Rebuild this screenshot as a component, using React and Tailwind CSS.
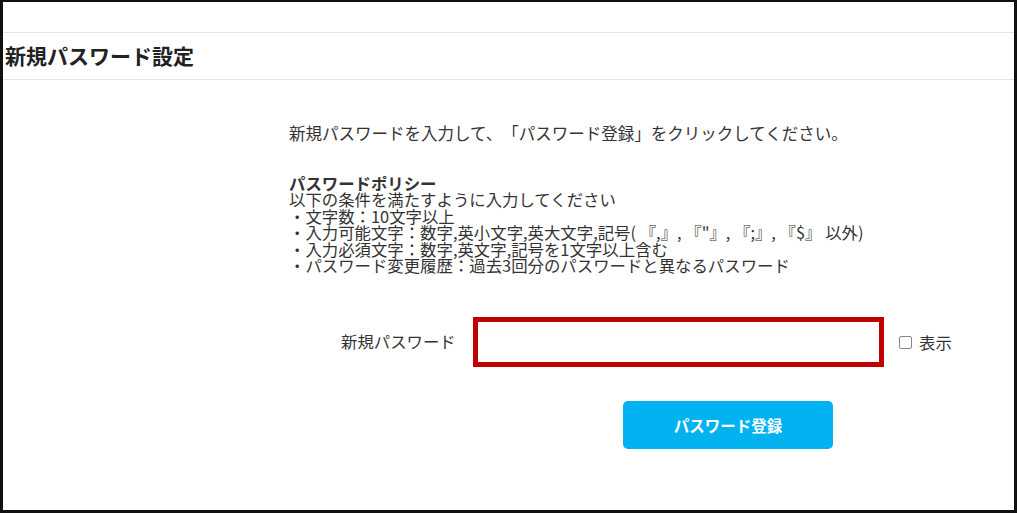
export default function App() {
  const font = { fontFamily: '"Noto Sans CJK JP", "Noto Sans", sans-serif' };
  return (
    <div
      className="w-[1017px] h-[513px] border-[3px] border-t-2 border-[#111] bg-white flex flex-col text-[#333] [text-spacing-trim:space-all]"
      style={font}
    >
      <div className="h-[30px]" />
      <div className="h-[48px] border-y border-[#e3e3e3] flex items-center pl-[2px]">
        <h1 className="text-[21px] font-bold text-[#222]">新規パスワード設定</h1>
      </div>

      <div className="pl-[286px] pt-[41px]">
        <p className="text-[16.5px] leading-[24px]">
          新規パスワードを入力して、「パスワード登録」をクリックしてください。
        </p>
        <div className="mt-[30px] text-[16.4px] leading-[16.4px]">
          <p className="font-bold">パスワードポリシー</p>
          <p>以下の条件を満たすように入力してください</p>
          <p>・文字数：10文字以上</p>
          <p>・入力可能文字：数字,英小文字,英大文字,記号( 『,』, 『"』, 『;』, 『$』 以外)</p>
          <p>・入力必須文字：数字,英文字,記号を1文字以上含む</p>
          <p>・パスワード変更履歴：過去3回分のパスワードと異なるパスワード</p>
        </div>
      </div>

      <div className="mt-[44px] pl-[338px] flex items-center">
        <span className="text-[16.4px] w-[115px] -mt-[3px] whitespace-nowrap">新規パスワード</span>
        <input
          type="password"
          className="ml-[17px] w-[411px] h-[50px] border-[5px] border-[#c00000] bg-white outline-none px-2"
        />
        <label className="ml-[15px] flex items-center gap-[7px] text-[16.4px]">
          <span className="w-[13px] h-[13px] border border-[#888] rounded-[2px] bg-white" />
          表示
        </label>
      </div>

      <div className="mt-[34px] pl-[620px]">
        <button className="w-[210px] h-[48px] rounded-[5px] bg-[#00b2f0] text-white text-[15.5px] font-bold">
          パスワード登録
        </button>
      </div>
    </div>
  );
}
